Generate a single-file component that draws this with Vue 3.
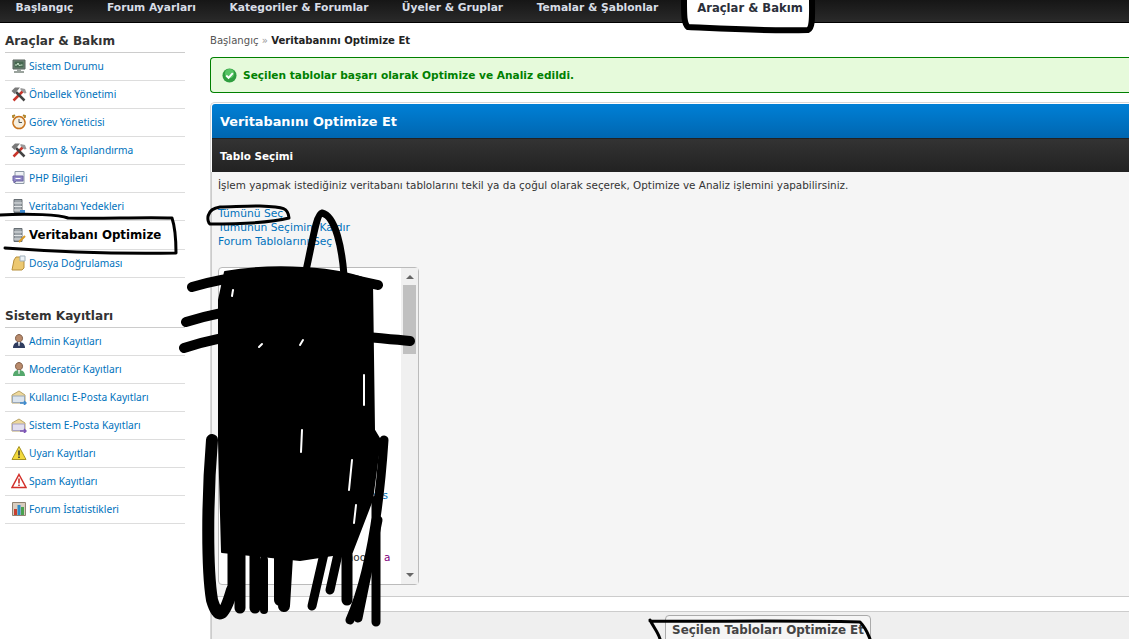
<script setup>
const nav = [
  { label: 'Başlangıç', width: 89, active: false },
  { label: 'Forum Ayarları', width: 125, active: false },
  { label: 'Kategoriler & Forumlar', width: 170, active: false },
  { label: 'Üyeler & Gruplar', width: 137, active: false },
  { label: 'Temalar & Şablonlar', width: 153, active: false },
  { label: 'Araçlar & Bakım', width: 126, active: true }
]

const icons = {
  monitor: [
    { d: 'M2 2h12v9H2z', fill: '#6f8277', stroke: '#59635d' },
    { d: 'M3.500 3.500h9v6h-9z', fill: '#46664f' },
    { d: 'M4 7h2l1-2 1.500 3 1-1h2', fill: 'none', stroke: '#cfe8d0' },
    { d: 'M6 11h4v2H6zM3 13h10v2H3z', fill: '#9aa39d' }
  ],
  tools: [
    { d: 'M2.500 14.500 12 5', fill: 'none', stroke: '#c9352b', w: 2.500 },
    { d: 'M13.500 14.500 5 6', fill: 'none', stroke: '#444', w: 2.500 },
    { d: 'M0.500 5 4 1.500h5L6.500 4.500 3.500 8z', fill: '#7a7a7a' },
    { d: 'M9.500 2l4.500 1 1.500 4-2 0.500-4-3.500z', fill: '#9a9a9a' }
  ],
  clock: [
    { d: 'M1.500 1.500 4 1 2 4zM14.500 1.500 12 1l2 3z', fill: '#d4a23a', stroke: '#a67a1c' },
    { d: 'M8 2.500a6 6 0 1 0 .01 0z', fill: '#f6efe0', stroke: '#c8741d', w: 1.500 },
    { d: 'M8 5v3.500h3', fill: 'none', stroke: '#555', w: 1 }
  ],
  php: [
    { d: 'M4 1.500h9v12H4z', fill: '#eef1f4', stroke: '#8d99a5' },
    { d: 'M2 6h10v5H5l-2 2v-2H2z', fill: '#8f86c4', stroke: '#6d64a3' },
    { d: 'M4.500 8.500h5', fill: 'none', stroke: '#fff', w: 1 }
  ],
  dbBackup: [
    { d: 'M3 1.500h8v13H3z', fill: '#9ca3a8', stroke: '#666d72' },
    { d: 'M3 5h8M3 8.500h8M3 12h8', fill: 'none', stroke: '#e4e6e8', w: 1 },
    { d: 'M9 12h5v3H9z', fill: '#3f8bd0' }
  ],
  dbOptimize: [
    { d: 'M3 1.500h8v13H3z', fill: '#9ca3a8', stroke: '#666d72' },
    { d: 'M3 5h8M3 8.500h8M3 12h8', fill: 'none', stroke: '#e4e6e8', w: 1 },
    { d: 'M8 15l6-6', fill: 'none', stroke: '#d99a25', w: 2 }
  ],
  folder: [
    { d: 'M3 5 5 2h8v11l-2 2H1z', fill: '#ecc871', stroke: '#b78f3a' },
    { d: 'M9 1h5v5H9z', fill: '#eef3f6', stroke: '#9fb0bb' }
  ],
  admin: [
    { d: 'M8 1.500a3.500 3.800 0 1 0 .01 0z', fill: '#b98b6c', stroke: '#7e5a43' },
    { d: 'M2 15c0-4 2.500-6 6-6s6 2 6 6z', fill: '#2f3c5f' },
    { d: 'M7 9h2l-.5 4h-1z', fill: '#e8e8e8' }
  ],
  moderator: [
    { d: 'M8 1.500a3.500 3.800 0 1 0 .01 0z', fill: '#b98b6c', stroke: '#7e5a43' },
    { d: 'M2 15c0-4 2.500-6 6-6s6 2 6 6z', fill: '#55a86d' },
    { d: 'M7 9h2l-.5 4h-1z', fill: '#e8e8e8' }
  ],
  mailUser: [
    { d: 'M1 6l7-4 6 4v8H1z', fill: '#eed89b', stroke: '#b9a468' },
    { d: 'M1.500 7h12v6.500h-12z', fill: '#dbe4ee', stroke: '#9aa8b8' },
    { d: 'M9 14h6M13 12l2 2-2 2', fill: 'none', stroke: '#3f8bd0', w: 1.500 }
  ],
  mailSystem: [
    { d: 'M1 6l7-4 6 4v8H1z', fill: '#eed89b', stroke: '#b9a468' },
    { d: 'M1.500 7h12v6.500h-12z', fill: '#e2dff0', stroke: '#a7a2c2' },
    { d: 'M9 14h6M13 12l2 2-2 2', fill: 'none', stroke: '#7d55b8', w: 1.500 }
  ],
  warn: [
    { d: 'M8 1.500 15 14.500H1z', fill: '#f3d93c', stroke: '#a79320' },
    { d: 'M8 5.500v5M8 11.500v1.500', fill: 'none', stroke: '#333', w: 1.500 }
  ],
  spam: [
    { d: 'M8 1.500 15 14.500H1z', fill: '#fff', stroke: '#d3302a', w: 1.500 },
    { d: 'M8 5.500v5M8 11.500v1.500', fill: 'none', stroke: '#c4241e', w: 1.500 }
  ],
  stats: [
    { d: 'M1.500 1.500h13v13h-13z', fill: '#d9cdbf', stroke: '#8e8272' },
    { d: 'M3 8h3v6H3z', fill: '#c8402f' },
    { d: 'M6.500 4h3v10h-3z', fill: '#2f8bc7' },
    { d: 'M10 6h3v8h-3z', fill: '#4aa24f' }
  ]
}

const tools = [
  { label: 'Sistem Durumu', icon: 'monitor' },
  { label: 'Önbellek Yönetimi', icon: 'tools' },
  { label: 'Görev Yöneticisi', icon: 'clock' },
  { label: 'Sayım & Yapılandırma', icon: 'tools' },
  { label: 'PHP Bilgileri', icon: 'php' },
  { label: 'Veritabanı Yedekleri', icon: 'dbBackup' },
  { label: 'Veritabanı Optimize', icon: 'dbOptimize', active: true },
  { label: 'Dosya Doğrulaması', icon: 'folder' }
]

const logs = [
  { label: 'Admin Kayıtları', icon: 'admin' },
  { label: 'Moderatör Kayıtları', icon: 'moderator' },
  { label: 'Kullanıcı E-Posta Kayıtları', icon: 'mailUser' },
  { label: 'Sistem E-Posta Kayıtları', icon: 'mailSystem' },
  { label: 'Uyarı Kayıtları', icon: 'warn' },
  { label: 'Spam Kayıtları', icon: 'spam' },
  { label: 'Forum İstatistikleri', icon: 'stats' }
]

const links = ['Tümünü Seç', 'Tümünün Seçimini Kaldır', 'Forum Tablolarını Seç']

const scribbles = [
  { d: 'M684 0C684 15 684 24 688 27C730 29 760 31 808 30C813 28 812 15 812 0', w: 6 },
  { d: 'M0 215C30 213 60 215 68 218C100 219 140 217 172 218C176 230 176 245 176 253C120 254 60 252 5 248', w: 3 },
  { d: 'M220 207C205 209 207 222 210 224C240 224 270 223 289 218C288 208 285 207 260 206C245 206 230 207 220 207', w: 3 },
  { d: 'M305 275C312 245 316 214 322 213C336 216 342 250 344 275', w: 7 },
  { d: 'M225 272C270 264 340 266 372 282L374 430L380 440L372 500L352 552L300 560L222 552L219 440L219 300Z', w: 2, fill: true },
  { d: 'M192 287C230 276 300 265 378 285M186 322C240 305 310 300 350 318M184 348C260 322 340 335 410 341', w: 10 },
  { d: 'M212 440C207 500 207 570 212 600C218 620 224 618 232 590', w: 12 },
  { d: 'M232 550V590', w: 9 },
  { d: 'M240 540V608', w: 11 },
  { d: 'M255 540V608', w: 11 },
  { d: 'M264 560V610', w: 8 },
  { d: 'M280 540V600M288 540L284 606', w: 12 },
  { d: 'M312 606L326 545M330 590L340 545', w: 9 },
  { d: 'M347 500V600', w: 11 },
  { d: 'M358 618L378 520', w: 9 },
  { d: 'M384 440C380 500 372 570 350 620M376 500V622', w: 9 },
  { d: 'M650 620C654 628 658 632 660 639M650 621C700 622 780 620 860 622C866 628 868 634 870 639', w: 3 }
]

const slits = [
  'M232 296l1-6', 'M300 345l3-5', 'M262 344l-3 3', 'M302 430l-1 22', 'M364 375v30', 'M352 460l-3 30', 'M356 505l-2 18'
]
</script>

<template>
  <div class="page">
    <header class="topbar">
      <a
        v-for="item in nav"
        :key="item.label"
        class="tab"
        :class="{ active: item.active }"
        :style="{ width: item.width + 'px' }"
      >{{ item.label }}</a>
    </header>

    <div class="columns">
      <aside class="sidebar">
        <h3 class="side-title">Araçlar &amp; Bakım</h3>
        <ul class="menu">
          <li v-for="t in tools" :key="t.label" class="menu-item" :class="{ current: t.active }">
            <svg class="icon" viewBox="0 0 16 16">
              <path
                v-for="(p, i) in icons[t.icon]"
                :key="i"
                :d="p.d"
                :fill="p.fill"
                :stroke="p.stroke || 'none'"
                :stroke-width="p.w || 1"
              />
            </svg>
            <span>{{ t.label }}</span>
          </li>
        </ul>

        <h3 class="side-title second">Sistem Kayıtları</h3>
        <ul class="menu">
          <li v-for="t in logs" :key="t.label" class="menu-item">
            <svg class="icon" viewBox="0 0 16 16">
              <path
                v-for="(p, i) in icons[t.icon]"
                :key="i"
                :d="p.d"
                :fill="p.fill"
                :stroke="p.stroke || 'none'"
                :stroke-width="p.w || 1"
              />
            </svg>
            <span>{{ t.label }}</span>
          </li>
        </ul>
      </aside>

      <main class="content">
        <div class="crumbs">Başlangıç <span class="sep">»</span> <b>Veritabanını Optimize Et</b></div>

        <div class="success">
          <svg class="ok" viewBox="0 0 16 16">
            <circle cx="8" cy="8" r="7.500" fill="#2f9e3f" />
            <circle cx="8" cy="6" r="5" fill="#57c465" />
            <path d="M4.500 8l2.500 2.500 4.500-5" fill="none" stroke="#fff" stroke-width="2" />
          </svg>
          <span>Seçilen tablolar başarı olarak Optimize ve Analiz edildi.</span>
        </div>

        <section class="panel">
          <div class="panel-head">Veritabanını Optimize Et</div>
          <div class="panel-sub">Tablo Seçimi</div>
          <div class="panel-body">
            <p class="intro">İşlem yapmak istediğiniz veritabanı tablolarını tekil ya da çoğul olarak seçerek, Optimize ve Analiz işlemini yapabilirsiniz.</p>
            <div class="links">
              <a v-for="l in links" :key="l">{{ l }}</a>
            </div>
            <div class="listbox">
              <div class="rows">
                <span class="row-sions">sions</span>
                <span class="row-mod">moo<i>a</i></span>
              </div>
              <div class="scrollbar">
                <span class="arrow up"></span>
                <span class="thumb"></span>
                <span class="arrow down"></span>
              </div>
            </div>
          </div>
          <div class="panel-gap"></div>
          <div class="panel-foot">
            <button class="submit" type="button">Seçilen Tabloları Optimize Et</button>
          </div>
        </section>
      </main>
    </div>

    <svg class="ink" viewBox="0 0 1129 639" aria-hidden="true">
      <path
        v-for="(s, i) in scribbles"
        :key="i"
        :d="s.d"
        :fill="s.fill ? '#000' : 'none'"
        stroke="#000"
        stroke-linecap="round"
        stroke-linejoin="round"
        :stroke-width="s.w"
      />
      <path
        v-for="(d, i) in slits"
        :key="'slit' + i"
        :d="d"
        fill="none"
        stroke="#fff"
        stroke-width="2"
        stroke-linecap="round"
      />
    </svg>
  </div>
</template>

<style>
html, body { margin: 0; overflow: hidden; background: #fff; }
</style>

<style scoped>
.page {
  position: relative;
  width: 1129px;
  height: 639px;
  overflow: hidden;
  background: #fff;
  font-family: "DejaVu Sans", sans-serif;
  font-size: 10.4px;
  color: #333;
}
.topbar {
  display: flex;
  height: 22px;
  background: linear-gradient(#161616, #2a2a2a);
  border-bottom: 1px solid #000;
}
.tab {
  display: block;
  flex: none;
  text-align: center;
  font-weight: bold;
  font-size: 10.7px;
  line-height: 15px;
  color: #d8dde6;
  white-space: nowrap;
}
.tab.active {
  background: #fff;
  color: #2b2f3a;
  font-size: 11.6px;
  line-height: 16px;
  margin-left: 13px;
  height: 23px;
}
.columns { display: flex; }
.sidebar { width: 180px; margin-left: 5px; flex: none; }
.side-title {
  margin: 0;
  padding-top: 11px;
  height: 18px;
  font-size: 12.1px;
  line-height: 15px;
  color: #333;
  border-bottom: 1px solid #ccc;
}
.side-title.second { margin-top: 20px; }
.menu { list-style: none; margin: 0; padding: 0; }
.menu-item {
  display: flex;
  align-items: center;
  height: 25px;
  padding: 0 0 2px 6px;
  border-bottom: 1px solid #ddd;
  color: #0072bc;
  font-family: "Noto Sans", sans-serif;
  font-size: 10.2px;
}
.menu-item .icon { width: 16px; height: 16px; margin-right: 2px; flex: none; }
.menu-item.current {
  height: 28px;
  padding-bottom: 0;
  color: #000;
  font-family: "DejaVu Sans", sans-serif;
  font-weight: bold;
  font-size: 11.8px;
}
.content { width: 1000px; margin-left: 25px; flex: none; }
.crumbs {
  padding-top: 10px;
  height: 24px;
  line-height: 15px;
  font-size: 10.1px;
  color: #555;
}
.crumbs b { color: #222; }
.sep { color: #999; }
.success {
  display: flex;
  align-items: center;
  gap: 6px;
  height: 34px;
  padding-left: 11px;
  background: #e6fadb;
  border: 1px solid #008000;
  border-right: 0;
  border-radius: 4px 0 0 4px;
  color: #008000;
  font-weight: bold;
  font-size: 10.6px;
}
.ok { width: 15px; height: 15px; }
.panel {
  margin-top: 9px;
  border: 1px solid #d8d8d8;
  border-right: 0;
  border-bottom: 0;
  border-radius: 5px 0 0 0;
  background: #fff;
  padding: 1px 0 0 1px;
}
.panel-head {
  height: 33px;
  padding: 1px 0 0 8px;
  line-height: 34px;
  background: linear-gradient(#0080d6, #0066b0);
  border-radius: 3px 0 0 0;
  color: #fff;
  font-weight: bold;
  font-size: 12.85px;
}
.panel-sub {
  height: 34px;
  padding-left: 8px;
  line-height: 34px;
  background: linear-gradient(#333, #222);
  border-top: 1px solid #222;
  box-sizing: border-box;
  color: #fff;
  font-weight: bold;
  font-size: 10.4px;
}
.panel-body {
  height: 425px;
  padding-left: 6px;
  margin-left: -1px;
  background: #f5f5f5;
  border-bottom: 1px solid #ccc;
  border-left: 1px solid #ccc;
  box-sizing: border-box;
}
.intro { margin: 0; padding-top: 6px; line-height: 15px; color: #333; }
.links { display: flex; flex-direction: column; margin-top: 14px; color: #0072bc; font-size: 10.7px; }
.links a { line-height: 14px; }
.listbox {
  display: flex;
  width: 199px;
  height: 316px;
  margin-top: 18px;
  background: #fff;
  border: 1px solid #bbb;
  border-radius: 4px;
}
.rows { position: relative; flex: 1; }
.row-sions, .row-mod { position: absolute; font-size: 10.5px; }
.row-sions { left: 142px; top: 221px; color: #0072bc; }
.row-mod { left: 124px; top: 283px; color: #333; }
.row-mod i { color: #800080; font-style: normal; margin-left: 18px; }
.scrollbar {
  display: flex;
  flex-direction: column;
  align-items: center;
  width: 17px;
  background: #f0f0f0;
}
.arrow { width: 0; height: 0; border-left: 4px solid transparent; border-right: 4px solid transparent; }
.arrow.up { margin-top: 7px; border-bottom: 4px solid #666; }
.arrow.down { margin-top: auto; margin-bottom: 7px; border-top: 4px solid #666; }
.thumb { width: 13px; height: 69px; margin-top: 6px; background: #c0c0c0; }
.panel-gap { height: 14px; margin-left: -1px; background: #fff; border-left: 1px solid #ccc; }
.panel-foot {
  height: 30px;
  margin-left: -1px;
  background: #efefef;
  border-top: 1px solid #ccc;
  border-left: 1px solid #ccc;
  padding-left: 453px;
  padding-top: 3px;
  box-sizing: border-box;
}
.submit {
  display: block;
  width: 206px;
  height: 30px;
  padding: 0;
  background: #f5f5f5;
  border: 1px solid #aaa;
  border-radius: 4px;
  color: #444;
  font-family: inherit;
  font-weight: bold;
  font-size: 11.9px;
  text-align: center;
}
.ink { position: absolute; left: 0; top: 0; width: 1129px; height: 639px; pointer-events: none; }
</style>
